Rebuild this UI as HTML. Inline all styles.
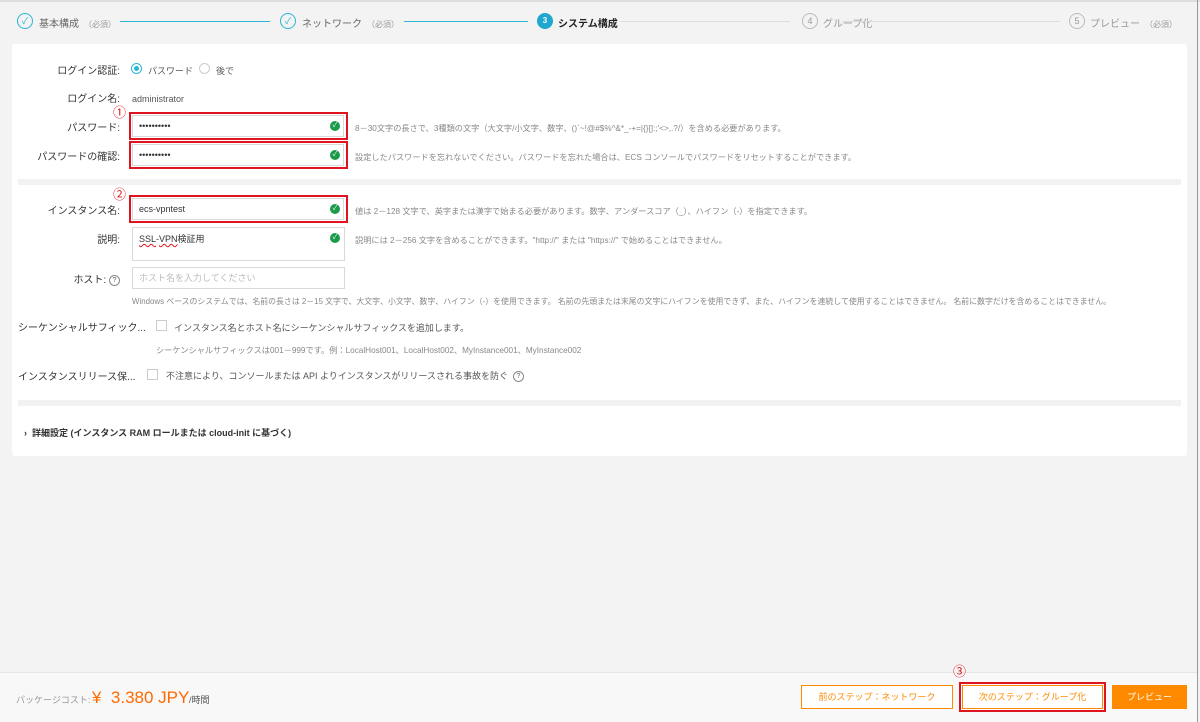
<!DOCTYPE html>
<html><head><meta charset="utf-8"><style>
*{box-sizing:border-box;margin:0;padding:0}
body{width:1200px;height:722px;background:#f3f3f3;font-family:"Liberation Sans","Noto Sans CJK JP",sans-serif;font-size:9px;color:#333;position:relative;overflow:hidden;line-height:14px}
.a{position:absolute;white-space:nowrap}
.t{margin-top:3px}
.lbl{position:absolute;text-align:right;width:120px;font-size:10px;color:#333;white-space:nowrap;margin-top:3px}
.inp{position:absolute;border:1px solid #d9d9d9;background:#fff;font-size:9px;padding-left:6px;color:#333}
.red{position:absolute;border:2px solid #e0141e}
.ok{position:absolute;width:10px;height:10px;border-radius:50%;background:#1a9b4a;color:#fff;font-size:7px;line-height:10px;text-align:center}
.hint{position:absolute;color:#888;font-size:8.2px;white-space:nowrap;margin-top:3px}
.num{position:absolute;color:#e0141e;font-size:13px;line-height:13px}
.cb{position:absolute;width:11px;height:11px;border:1px solid #ccc;background:#fff}
.circ{position:absolute;width:16px;height:16px;border-radius:50%;border:1px solid #2bb5d6;color:#2bb5d6;font-size:9px;line-height:14px;text-align:center}
.q{display:inline-block;width:11px;height:11px;border:1px solid #888;border-radius:50%;font-size:7px;line-height:9px;text-align:center;color:#666;vertical-align:middle}
</style></head><body>
<div class="a" style="left:0;top:0;width:1200px;height:2px;background:#ddd"></div>
<div class="a" style="right:2px;top:0;width:1px;height:722px;background:#999"></div>

<div class="circ" style="left:17px;top:13px">✓</div>
<div class="a t" style="left:39px;top:15px;font-size:10px;color:#666">基本構成 <span style="font-size:8px;color:#999">&nbsp;（必須）</span></div>
<div class="a" style="left:120px;top:21px;width:150px;height:1px;background:#2bb5d6"></div>
<div class="circ" style="left:280px;top:13px">✓</div>
<div class="a t" style="left:302px;top:15px;font-size:10px;color:#666">ネットワーク <span style="font-size:8px;color:#999">&nbsp;（必須）</span></div>
<div class="a" style="left:404px;top:21px;width:124px;height:1px;background:#2bb5d6"></div>
<div class="a" style="left:537px;top:13px;width:16px;height:16px;border-radius:50%;background:#1ea7cf;color:#fff;font-size:8px;line-height:16px;text-align:center;font-weight:bold">3</div>
<div class="a t" style="left:558px;top:15px;font-size:10px;font-weight:bold;color:#222">システム構成</div>
<div class="a" style="left:620px;top:21px;width:170px;height:1px;background:#ddd"></div>
<div class="circ" style="left:802px;top:13px;border-color:#bbb;color:#999">4</div>
<div class="a t" style="left:823px;top:15px;font-size:10px;color:#999">グループ化</div>
<div class="a" style="left:842px;top:21px;width:218px;height:1px;background:#ddd"></div>
<div class="circ" style="left:1069px;top:13px;border-color:#bbb;color:#999">5</div>
<div class="a t" style="left:1090px;top:15px;font-size:10px;color:#999">プレビュー <span style="font-size:8px">&nbsp;（必須）</span></div>

<div class="a" style="left:12px;top:44px;width:1175px;height:412px;background:#fff;border-radius:3px"></div>
<div class="a" style="left:18px;top:179px;width:1163px;height:6px;background:#f2f2f2"></div>
<div class="a" style="left:18px;top:400px;width:1163px;height:6px;background:#f2f2f2"></div>

<div class="lbl" style="left:0;top:62px">ログイン認証:</div>
<div class="a" style="left:131px;top:63px;width:11px;height:11px;border:1px solid #2bb5d6;border-radius:50%"></div>
<div class="a" style="left:134px;top:66px;width:5px;height:5px;background:#2bb5d6;border-radius:50%"></div>
<div class="a t" style="left:148px;top:61px;font-size:9px;color:#555">パスワード</div>
<div class="a" style="left:199px;top:63px;width:11px;height:11px;border:1px solid #ccc;border-radius:50%"></div>
<div class="a t" style="left:216px;top:61px;font-size:9px;color:#555">後で</div>

<div class="lbl" style="left:0;top:90px">ログイン名:</div>
<div class="a t" style="left:132px;top:89px;font-size:9px;color:#555">administrator</div>

<div class="num" style="left:113px;top:106px">①</div>
<div class="lbl" style="left:0;top:119px">パスワード:</div>
<div class="inp" style="left:132px;top:115px;width:212px;height:22px;line-height:20px">••••••••••</div>
<div class="red" style="left:129px;top:112px;width:219px;height:28px"></div>
<div class="ok" style="left:330px;top:121px">✓</div>
<div class="hint" style="left:355px;top:119px">8－30文字の長さで、3種類の文字（大文字/小文字、数字、()`~!@#$%^&amp;*_-+=|{}[]:;'&lt;&gt;,.?/）を含める必要があります。</div>

<div class="lbl" style="left:0;top:148px">パスワードの確認:</div>
<div class="inp" style="left:132px;top:144px;width:212px;height:22px;line-height:20px">••••••••••</div>
<div class="red" style="left:129px;top:141px;width:219px;height:28px"></div>
<div class="ok" style="left:330px;top:150px">✓</div>
<div class="hint" style="left:355px;top:148px">設定したパスワードを忘れないでください。パスワードを忘れた場合は、ECS コンソールでパスワードをリセットすることができます。</div>

<div class="num" style="left:113px;top:188px">②</div>
<div class="lbl" style="left:0;top:202px">インスタンス名:</div>
<div class="inp" style="left:132px;top:198px;width:212px;height:22px;line-height:20px">ecs-vpntest</div>
<div class="red" style="left:129px;top:195px;width:219px;height:28px"></div>
<div class="ok" style="left:330px;top:204px">✓</div>
<div class="hint" style="left:355px;top:202px">値は 2－128 文字で、英字または漢字で始まる必要があります。数字、アンダースコア（_）、ハイフン（-）を指定できます。</div>

<div class="lbl" style="left:0;top:231px">説明:</div>
<div class="inp" style="left:132px;top:227px;width:213px;height:34px;padding-top:4px"><span style="text-decoration:underline wavy #e0141e">SSL</span>-<span style="text-decoration:underline wavy #e0141e">VPN</span>検証用</div>
<div class="ok" style="left:330px;top:233px">✓</div>
<div class="hint" style="left:355px;top:231px">説明には 2－256 文字を含めることができます。"http://" または "https://" で始めることはできません。</div>

<div class="lbl" style="left:0;top:271px">ホスト: <span class="q">?</span></div>
<div class="inp" style="left:132px;top:267px;width:213px;height:22px;line-height:20px;color:#bbb">ホスト名を入力してください</div>
<div class="hint" style="left:132px;top:292px;font-size:7.9px">Windows ベースのシステムでは、名前の長さは 2－15 文字で、大文字、小文字、数字、ハイフン（-）を使用できます。 名前の先頭または末尾の文字にハイフンを使用できず、また、ハイフンを連続して使用することはできません。 名前に数字だけを含めることはできません。</div>

<div class="a t" style="left:18px;top:319px;font-size:10px;color:#333">シーケンシャルサフィック...</div>
<div class="cb" style="left:156px;top:320px"></div>
<div class="a t" style="left:174px;top:318px;font-size:9px;color:#555">インスタンス名とホスト名にシーケンシャルサフィックスを追加します。</div>
<div class="hint" style="left:156px;top:341px">シーケンシャルサフィックスは001－999です。例：LocalHost001、LocalHost002、MyInstance001、MyInstance002</div>

<div class="a t" style="left:18px;top:368px;font-size:10px;color:#333">インスタンスリリース保...</div>
<div class="cb" style="left:147px;top:369px"></div>
<div class="a t" style="left:166px;top:366px;font-size:9px;color:#555">不注意により、コンソールまたは API よりインスタンスがリリースされる事故を防ぐ &nbsp;<span class="q">?</span></div>

<div class="a t" style="left:24px;top:423px;font-size:9px;font-weight:bold;color:#333">› &nbsp;詳細設定 (インスタンス RAM ロールまたは cloud-init に基づく)</div>

<div class="a" style="left:0;top:672px;width:1197px;height:50px;background:#f8f8f9;border-top:1px solid #e6e6e6"></div>
<div class="a t" style="left:16px;top:690px;font-size:9px;color:#999">パッケージコスト:</div>
<div class="a" style="left:92px;top:688px;font-size:17px;line-height:20px;color:#ff6a00">¥&nbsp; 3.380 JPY</div>
<div class="a t" style="left:189px;top:690px;font-size:9px;color:#555">/時間</div>

<div class="a" style="left:801px;top:685px;width:152px;height:24px;border:1px solid #ff8a00;background:#fff;color:#ff8a00;font-size:9px;line-height:22px;text-align:center">前のステップ：ネットワーク</div>
<div class="num" style="left:953px;top:665px">③</div>
<div class="a" style="left:959px;top:682px;width:147px;height:30px;border:2px solid #e0141e"></div>
<div class="a" style="left:962px;top:685px;width:141px;height:24px;border:1px solid #ff8a00;background:#fff;color:#ff8a00;font-size:9px;line-height:22px;text-align:center">次のステップ：グループ化</div>
<div class="a" style="left:1112px;top:685px;width:75px;height:24px;background:#ff8a00;color:#fff;font-size:9px;line-height:24px;text-align:center">プレビュー</div>
</body></html>
